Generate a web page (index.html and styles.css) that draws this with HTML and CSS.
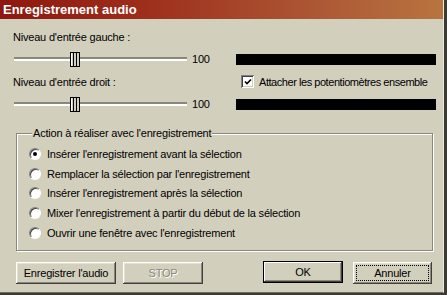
FILE: index.html
```html
<!DOCTYPE html>
<html lang="fr">
<head>
<meta charset="UTF-8">
<title>Enregistrement audio</title>
<link rel="stylesheet" href="styles.css">
</head>
<body>
<div class="window">
    <div class="titlebar">Enregistrement audio</div>
    <div class="content">
        <div class="levels">
            <div class="label">Niveau d'entrée gauche :</div>
            <div></div>
            <div class="slider-row">
                <div class="slider">
                    <div class="track"></div>
                    <svg class="thumb" width="10" height="15" viewBox="0 0 10 15">
                        <rect x="0.5" y="0.5" width="9" height="14" fill="#d3cfbd" stroke="#000"/>
                        <line x1="1.5" y1="1" x2="1.5" y2="14" stroke="#fff"/>
                        <line x1="3.5" y1="1" x2="3.5" y2="14" stroke="#000"/>
                        <line x1="6.5" y1="1" x2="6.5" y2="14" stroke="#000"/>
                    </svg>
                </div>
                <span class="value">100</span>
            </div>
            <div class="meter-cell"><div class="meter"></div></div>
            <div class="label">Niveau d'entrée droit :</div>
            <label class="check">
                <span class="checkbox">
                    <svg width="8" height="8" viewBox="0 0 8 8"><path d="M1 3.5 L3 5.5 L7 1.5" fill="none" stroke="#000" stroke-width="1.6"/></svg>
                </span>
                <span class="check-text">Attacher les potentiomètres ensemble</span>
            </label>
            <div class="slider-row">
                <div class="slider">
                    <div class="track"></div>
                    <svg class="thumb" width="10" height="15" viewBox="0 0 10 15">
                        <rect x="0.5" y="0.5" width="9" height="14" fill="#d3cfbd" stroke="#000"/>
                        <line x1="1.5" y1="1" x2="1.5" y2="14" stroke="#fff"/>
                        <line x1="3.5" y1="1" x2="3.5" y2="14" stroke="#000"/>
                        <line x1="6.5" y1="1" x2="6.5" y2="14" stroke="#000"/>
                    </svg>
                </div>
                <span class="value">100</span>
            </div>
            <div class="meter-cell"><div class="meter"></div></div>
        </div>

        <fieldset class="group">
            <legend>Action à réaliser avec l'enregistrement</legend>
            <div class="option"><span class="radio checked"></span>Insérer l'enregistrement avant la sélection</div>
            <div class="option"><span class="radio"></span>Remplacer la sélection par l'enregistrement</div>
            <div class="option"><span class="radio"></span>Insérer l'enregistrement après la sélection</div>
            <div class="option"><span class="radio"></span>Mixer l'enregistrement à partir du début de la sélection</div>
            <div class="option"><span class="radio"></span>Ouvrir une fenêtre avec l'enregistrement</div>
        </fieldset>

        <div class="buttons">
            <button class="btn btn-record">Enregistrer l'audio</button>
            <button class="btn btn-stop" disabled>STOP</button>
            <span class="spacer"></span>
            <button class="btn btn-ok">OK</button>
            <button class="btn btn-cancel"><span class="focus">Annuler</span></button>
        </div>
    </div>
</div>
</body>
</html>
```

FILE: styles.css
```css
body {
    margin: 0;
    padding: 0;
    background-color: #3c3a34;
    font-family: "Liberation Sans", Arial, sans-serif;
    font-size: 11px;
    letter-spacing: -0.2px;
    color: #000;
}

.window {
    width: 443px;
    height: 292px;
    background-color: #d3cfbd;
    border-right: 1px solid #ece8dc;
    border-bottom: 1px solid #6e6b60;
    overflow: hidden;
}

.titlebar {
    height: 19px;
    line-height: 19px;
    padding-left: 3px;
    background: linear-gradient(to right, #8e1810 0%, #9c2c1a 30%, #ac5634 70%, #b8743f 100%);
    color: #fff;
    font-weight: bold;
    font-size: 13px;
    letter-spacing: 0;
}

.content {
    padding: 7px 0 0 13px;
}

.levels {
    display: grid;
    grid-template-columns: 222px 201px;
    grid-template-rows: 22px 22px 23px 22px;
}

.label {
    display: flex;
    align-items: center;
}

.slider-row {
    display: flex;
    align-items: center;
}

.slider {
    position: relative;
    width: 173px;
    height: 15px;
    margin-left: 1px;
}

.track {
    position: absolute;
    left: 0;
    right: 0;
    top: 5px;
    height: 2px;
    background-color: #8a877c;
    border-bottom: 2px solid #fff;
}

.thumb {
    position: absolute;
    left: 56px;
    top: 0;
}

.value {
    margin-left: 5px;
}

.meter-cell {
    display: flex;
    align-items: center;
}

.meter {
    width: 200px;
    height: 11px;
    margin-left: 1px;
    background-color: #000;
}

.check {
    display: flex;
    align-items: center;
    padding-left: 6px;
    gap: 5px;
    white-space: nowrap;
}

.check-text {
    letter-spacing: -0.45px;
}

.checkbox {
    flex: none;
    width: 13px;
    height: 13px;
    box-sizing: border-box;
    background-color: #fff;
    box-shadow: inset 1px 1px #808080, inset -1px -1px #fff, inset 2px 2px #404040, inset -2px -2px #d3cfbd;
    display: flex;
    align-items: center;
    justify-content: center;
}

.group {
    width: 417px;
    margin: 12px 0 0 3px;
    padding: 5px 0 7px 12px;
    box-sizing: border-box;
    border: 1px solid #8a877c;
    box-shadow: inset 1px 1px #fff, 1px 1px #fff;
}

.group legend {
    margin-left: 3px;
    padding: 0 1px;
    background-color: #d3cfbd;
}

.option {
    display: flex;
    align-items: center;
    height: 19.75px;
    gap: 6px;
}

.radio {
    width: 12px;
    height: 12px;
    border-radius: 50%;
    background-color: #fff;
    box-sizing: border-box;
    border: 1px solid;
    border-color: #808080 #fff #fff #808080;
    box-shadow: inset 1px 1px #404040;
    display: flex;
    align-items: center;
    justify-content: center;
}

.radio.checked::after {
    content: "";
    width: 4px;
    height: 4px;
    border-radius: 50%;
    background-color: #000;
}

.buttons {
    display: flex;
    margin: 11px 0 0 3px;
    width: 416px;
    gap: 7px;
}

.spacer {
    flex: 1;
}

.btn {
    height: 22px;
    padding: 0;
    border: none;
    background-color: #d3cfbd;
    font-family: "Liberation Sans", Arial, sans-serif;
    font-size: 11px;
    letter-spacing: -0.2px;
    color: #000;
    box-shadow: inset -1px -1px #404040, inset 1px 1px #fff, inset -2px -2px #8a877c, inset 2px 2px #e4e0d0;
}

.btn-record {
    width: 100px;
}

.btn-stop {
    width: 80px;
    color: #8a877c;
    text-shadow: 1px 1px #fff;
}

.btn-ok {
    width: 80px;
    margin-top: -1px;
    box-shadow: inset 0 0 0 1px #000, inset -2px -2px #404040, inset 2px 2px #fff, inset -3px -3px #8a877c;
}

.btn-cancel {
    width: 79px;
    margin-left: 3px;
    display: flex;
    padding: 3px;
}

.focus {
    flex: 1;
    display: flex;
    align-items: center;
    justify-content: center;
    border: 1px dotted #000;
}
```
